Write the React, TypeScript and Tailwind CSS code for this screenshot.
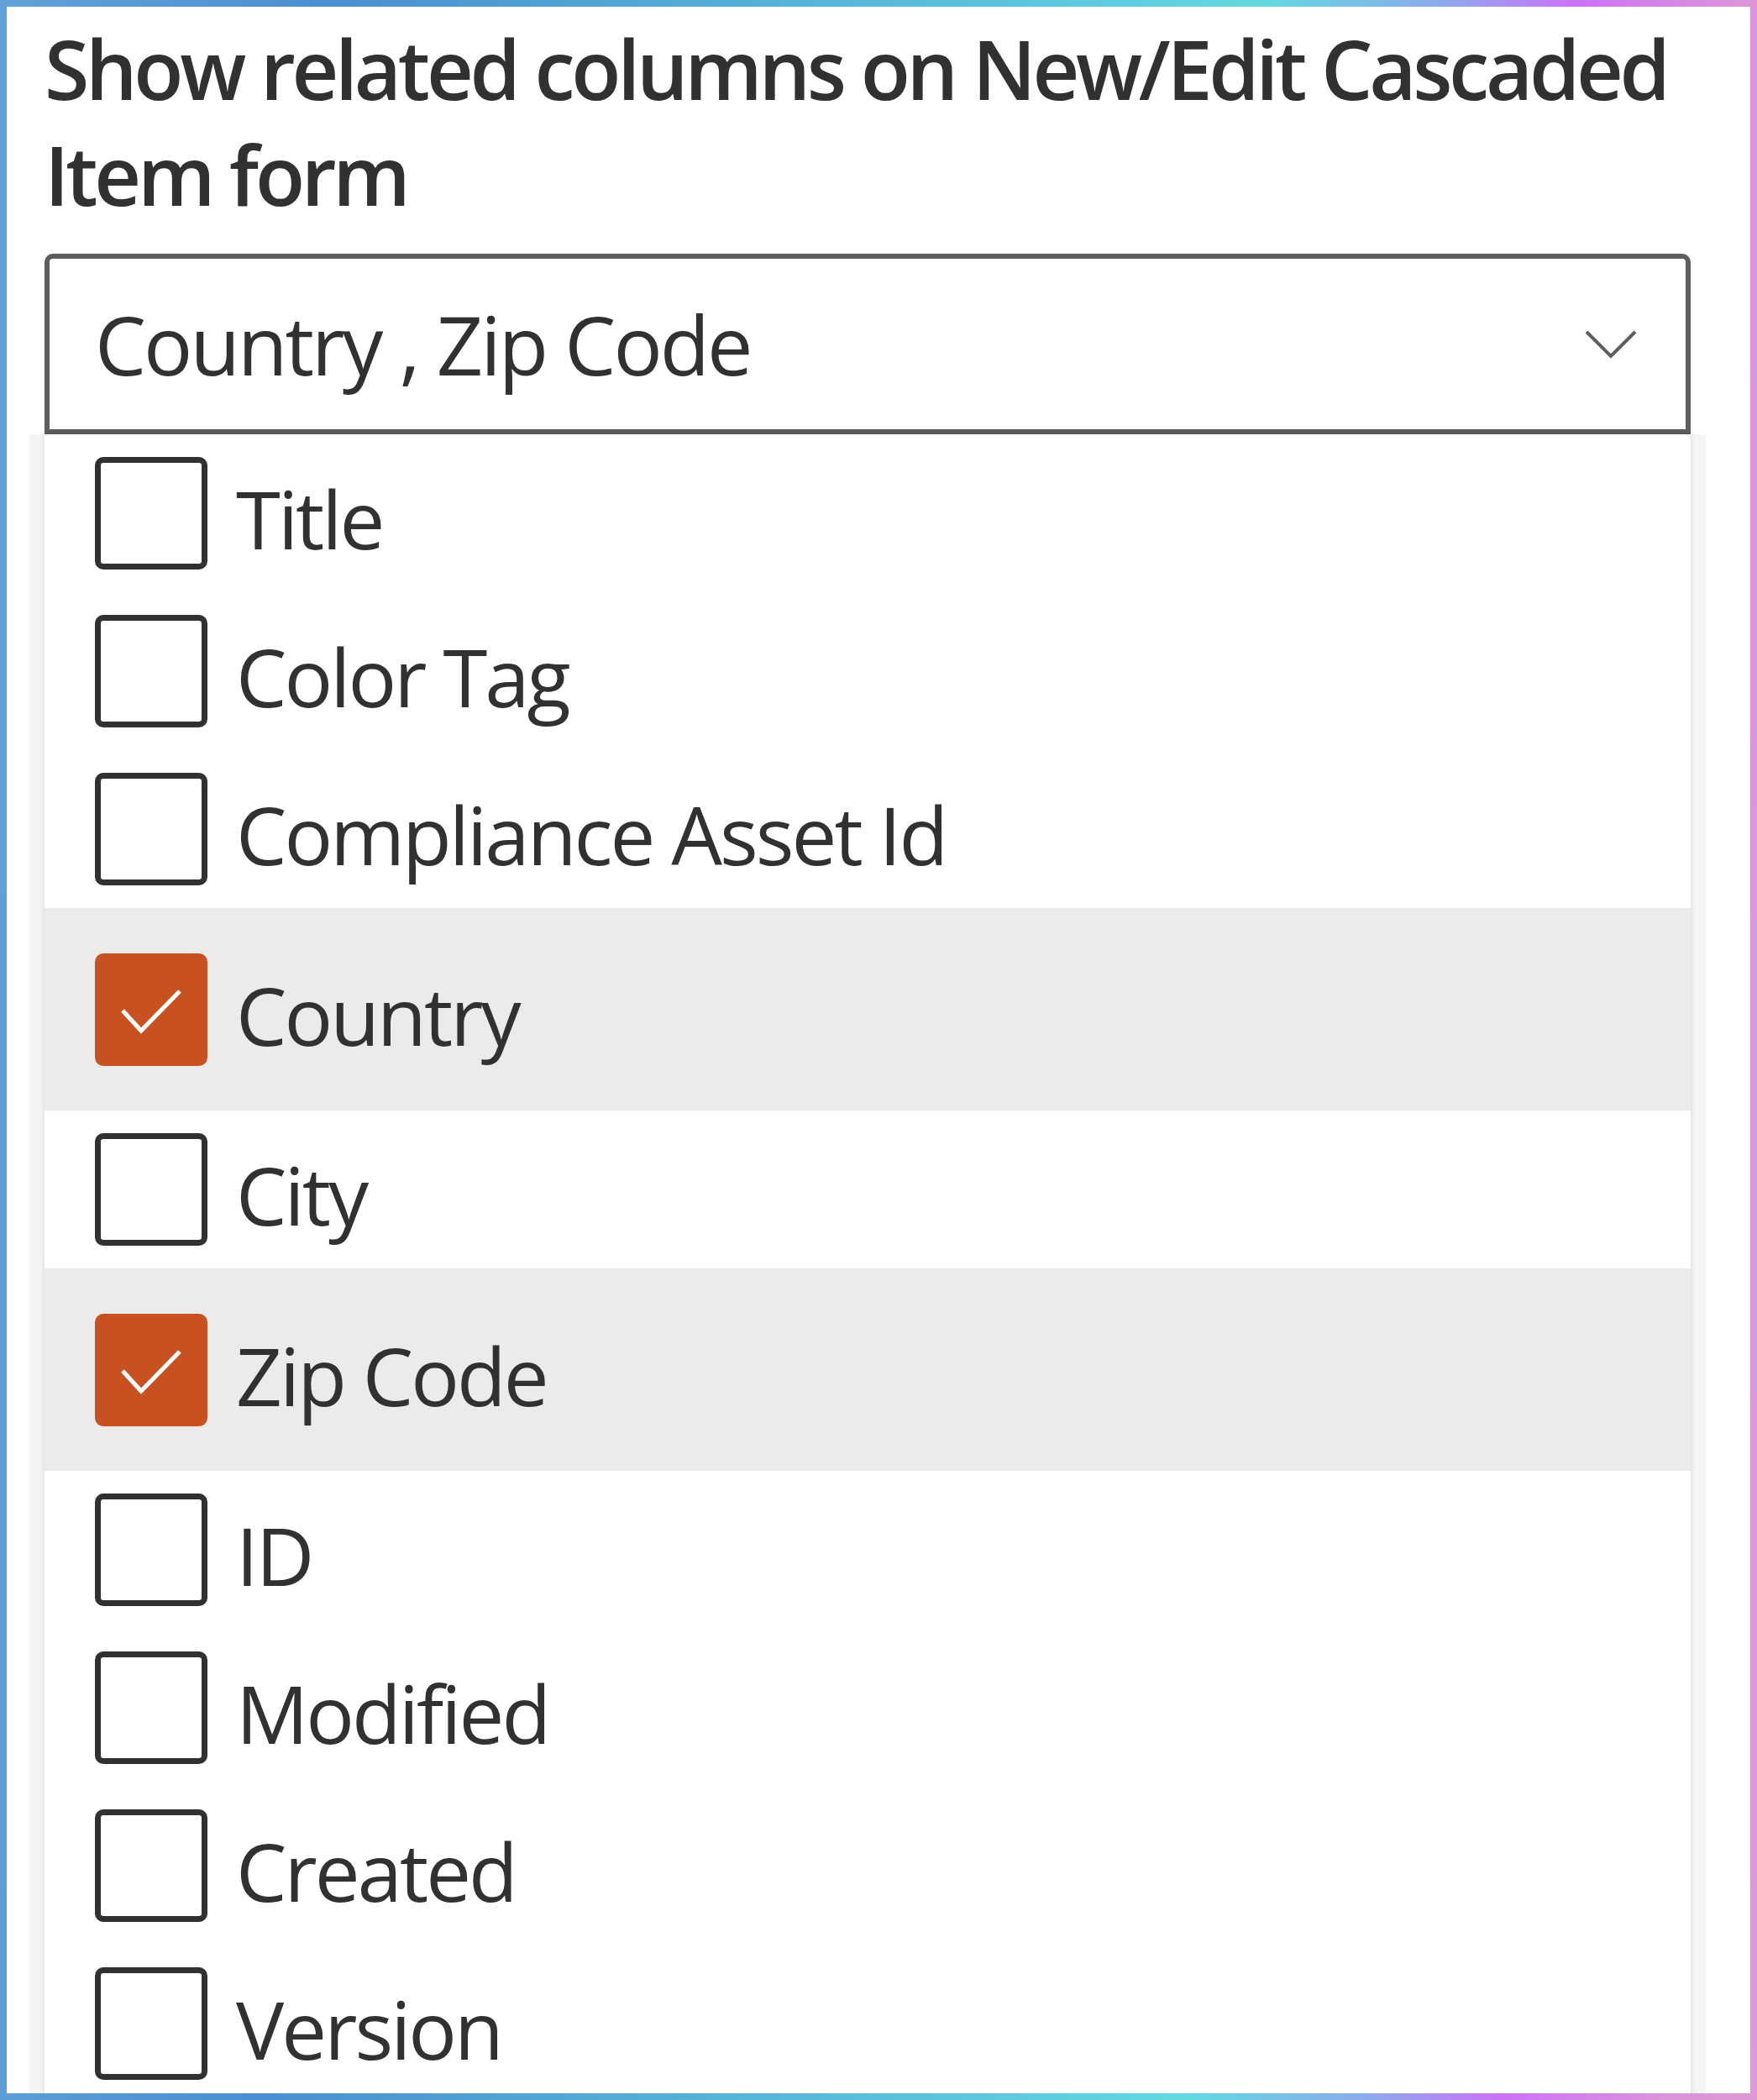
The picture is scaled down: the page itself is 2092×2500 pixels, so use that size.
import React from "react";

type Column = { name: string; checked?: boolean };

const COLUMNS: Column[] = [
  { name: "Title" },
  { name: "Color Tag" },
  { name: "Compliance Asset Id" },
  { name: "Country", checked: true },
  { name: "City" },
  { name: "Zip Code", checked: true },
  { name: "ID" },
  { name: "Modified" },
  { name: "Created" },
  { name: "Version" },
];

function Chevron() {
  return (
    <svg width="62" height="34" viewBox="0 0 62 34" fill="none">
      <polyline points="2,2 31,31 60,2" stroke="#605e5c" strokeWidth="4" />
    </svg>
  );
}

function CheckBox({ checked }: { checked?: boolean }) {
  if (checked) {
    return (
      <div className="w-[134px] h-[134px] shrink-0 rounded-[10px] bg-[#c85122] flex items-center justify-center">
        <svg width="134" height="134" viewBox="0 0 134 134" fill="none">
          <polyline points="33,68 55,92 101,45" stroke="#ffffff" strokeWidth="5" />
        </svg>
      </div>
    );
  }
  return <div className="w-[134px] h-[134px] shrink-0 rounded-[10px] border-[7px] border-[#323130] bg-white" />;
}

function OptionRow({ column }: { column: Column }) {
  return (
    <div
      className={
        column.checked
          ? "flex items-center h-[241px] pl-[60px] gap-[34px] bg-[#edebe9]"
          : "flex items-center h-[188px] pl-[60px] gap-[34px] bg-white"
      }
    >
      <CheckBox checked={column.checked} />
      <span className="text-[96px] leading-none tracking-[-3px] pt-[12px] text-[#323130]">{column.name}</span>
    </div>
  );
}

export default function App() {
  const selected = COLUMNS.filter((c) => c.checked).map((c) => c.name).join(" , ");
  return (
    <div className="w-[2092px] h-[2500px] p-[8px] bg-[linear-gradient(92deg,#62a2da_0%,#4a8fd0_18%,#5bc4dc_55%,#62d9e0_69%,#8ea9ec_79%,#cc72f7_86%,#dc94da_95%,#dd9ad4_100%)] font-['Open_Sans','Noto_Sans',sans-serif]">
      <div className="w-full h-full bg-white overflow-hidden pl-[45px] pr-[71px] pt-[10px]">
        <h2 className="text-[97px] leading-[126px] font-semibold tracking-[-4.3px] text-[#323130]">
          Show related columns on New/Edit Cascaded Item form
        </h2>

        <div className="mt-[32px] h-[215px] border-[6px] border-[#605e5c] rounded-t-[10px] bg-white flex items-center justify-between pl-[54px] pr-[58px]">
          <span className="text-[97px] leading-none tracking-[-3px] text-[#323130]">{selected}</span>
          <Chevron />
        </div>

        <div className="relative z-10 bg-white shadow-[0_0_8px_rgba(0,0,0,0.12),-18px_0_0_0_#f5f5f5,18px_0_0_0_#f5f5f5]">
          {COLUMNS.map((c) => (
            <OptionRow key={c.name} column={c} />
          ))}
        </div>
      </div>
    </div>
  );
}
